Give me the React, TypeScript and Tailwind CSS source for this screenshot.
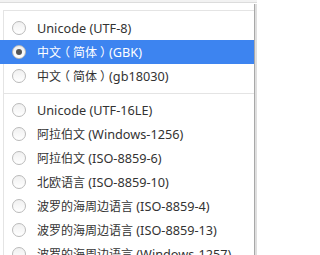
import React from "react";

type Item = { cn: string; en: string; selected?: boolean };

const groupA: Item[] = [
  { cn: "", en: "Unicode (UTF-8)" },
  { cn: "中文（简体）", en: "(GBK)", selected: true },
  { cn: "中文（简体）", en: "(gb18030)" },
];

const groupB: Item[] = [
  { cn: "", en: "Unicode (UTF-16LE)" },
  { cn: "阿拉伯文", en: " (Windows-1256)" },
  { cn: "阿拉伯文", en: " (ISO-8859-6)" },
  { cn: "北欧语言", en: " (ISO-8859-10)" },
  { cn: "波罗的海周边语言", en: " (ISO-8859-4)" },
  { cn: "波罗的海周边语言", en: " (ISO-8859-13)" },
  { cn: "波罗的海周边语言", en: " (Windows-1257)" },
];

function Cjk({ text }: { text: string }) {
  const parts = text.split(/([（）])/).filter((p) => p !== "");
  return (
    <span className="flex font-['Noto_Sans_CJK_SC',sans-serif] text-[12px]">
      {parts.map((p, i) =>
        p === "（" ? (
          <span key={i} className="-ml-[3px] pr-[3px]">
            {p}
          </span>
        ) : p === "）" ? (
          <span key={i} className="-mr-[3px] pl-[3px]">
            {p}
          </span>
        ) : (
          <span key={i}>{p}</span>
        )
      )}
    </span>
  );
}

function Radio({ checked }: { checked?: boolean }) {
  return (
    <span className="flex h-[14px] w-[14px] shrink-0 items-center justify-center rounded-full border border-[#bababa] bg-gradient-to-b from-[#f0f0f0] to-[#ffffff]">
      {checked && <span className="h-[6px] w-[6px] rounded-full bg-[#555555]" />}
    </span>
  );
}

function Row({ item }: { item: Item }) {
  return (
    <div
      className={
        item.selected
          ? "relative flex h-[24px] items-center gap-[11px] bg-[#3d84f0] pl-[12px] text-white"
          : "relative flex h-[24px] items-center gap-[11px] pl-[12px] text-[#333333]"
      }
    >
      <Radio checked={item.selected} />
      <span className="flex items-center whitespace-pre leading-none">
        {item.cn && <Cjk text={item.cn} />}
        <span className="font-['Noto_Sans','Noto_Sans_CJK_SC',sans-serif] text-[12.7px]">{item.en}</span>
      </span>
    </div>
  );
}

export default function App() {
  return (
    <div className="relative flex h-[255px] w-[257px] flex-col overflow-hidden bg-white">
      <div className="h-[3px] shrink-0 border-b border-[#dcdcdc] bg-[#f2f2f2]" />
      <div className="flex flex-1">
        <div className="relative flex-1">
          <div className="absolute bottom-0 left-[3px] top-[7px] w-px bg-[#e4e4e4]" />
          <div className="h-[7px]" />
          <div className="ml-[3px] h-px bg-[#e4e4e4]" />
          <div className="h-[5px]" />
          {groupA.map((it) => (
            <Row key={it.cn + it.en} item={it} />
          ))}
          <div className="relative flex h-[10px] flex-col justify-center pl-[3px]">
            <div className="h-px bg-[#e4e4e4]" />
          </div>
          {groupB.map((it) => (
            <Row key={it.cn + it.en} item={it} />
          ))}
        </div>
        <div className="mt-[1px] w-[3px] shrink-0 border-l border-[#a8a8a8] bg-[#dedede]" />
      </div>
    </div>
  );
}
